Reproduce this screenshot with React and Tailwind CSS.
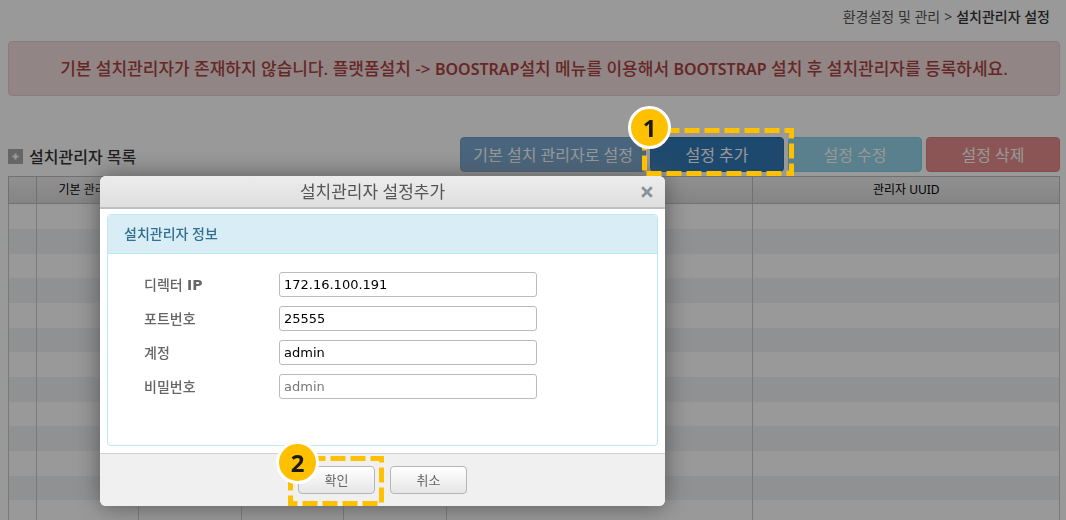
import React from "react";

const columns = ["", "기본 관리자", "", "", "", "", "관리자 UUID"];
const rows = Array.from({ length: 14 }, (_, i) => i);

const fields = [
  { id: "ip", label: "디렉터 IP", value: "172.16.100.191" },
  { id: "port", label: "포트번호", value: "25555" },
  { id: "account", label: "계정", value: "admin" },
  { id: "password", label: "비밀번호", placeholder: "admin" },
];

function StepBadge({ children, className }) {
  return (
    <span
      className={`absolute flex h-[43px] w-[43px] items-center justify-center rounded-full border-[3px] border-white bg-[#ffc000] text-2xl font-bold text-[#1a1a1a] ${className}`}
    >
      {children}
    </span>
  );
}

function DashedFrame({ width, height, className }) {
  return (
    <svg
      className={`pointer-events-none absolute max-w-none ${className}`}
      width={width}
      height={height}
      viewBox={`0 0 ${width} ${height}`}
      aria-hidden="true"
    >
      <rect
        x="2.5"
        y="2.5"
        width={width - 5}
        height={height - 5}
        fill="none"
        stroke="#ffc000"
        strokeWidth="5"
        strokeDasharray="15 5"
      />
    </svg>
  );
}

function ToolbarButton({ children, className, ...props }) {
  return (
    <button
      type="button"
      className={`h-[35px] min-w-[134px] rounded border px-3 text-base leading-5 text-white disabled:opacity-65 ${className}`}
      {...props}
    >
      {children}
    </button>
  );
}

function DialogButton({ children }) {
  return (
    <button
      type="button"
      className="h-7 w-[77px] rounded border border-[#b6b6b6] bg-linear-to-b from-white to-[#e6e6e6] text-[13px] leading-5 text-[#666]"
    >
      {children}
    </button>
  );
}

function ManagerDialog() {
  return (
    <section
      role="dialog"
      aria-labelledby="dialog-title"
      className="w-[565px] rounded-md bg-white shadow-[0_0_25px_#555]"
    >
      <header className="flex h-[33px] items-center rounded-t-md border-b-2 border-[#bfbfbf] bg-linear-to-b from-[#ececec] to-[#dfdfdf] px-2">
        <h2 id="dialog-title" className="flex-1 text-center text-[17px] leading-6 text-[#555]">
          설치관리자 설정추가
        </h2>
        <button type="button" aria-label="닫기" className="p-1">
          <svg width="12" height="12" viewBox="0 0 12 12" aria-hidden="true">
            <path d="M1.2 1.2 10.8 10.8M10.8 1.2 1.2 10.8" stroke="#87939a" strokeWidth="2.8" />
          </svg>
        </button>
      </header>

      <div className="px-[7px] pt-[5px] pb-[7px]">
        <div className="rounded border border-[#bce8f1] bg-white">
          <h3 className="flex h-[39px] items-center rounded-t border-b border-[#bce8f1] bg-[#d9edf7] px-4 text-sm font-medium text-[#31708f]">
            설치관리자 정보
          </h3>
          <form className="flex flex-col gap-[9px] pt-[18px] pr-[120px] pb-[46px] pl-9">
            {fields.map((field) => (
              <div key={field.id} className="flex items-center">
                <label
                  htmlFor={field.id}
                  className="w-[135px] font-['DejaVu_Sans','Noto_Sans_CJK_KR',sans-serif] text-sm font-medium text-[#666]"
                >
                  {field.label === "디렉터 IP" ? (
                    <>
                      디렉터 <b className="font-['DejaVu_Sans',sans-serif]">IP</b>
                    </>
                  ) : (
                    field.label
                  )}
                </label>
                <input
                  id={field.id}
                  type="text"
                  defaultValue={field.value}
                  placeholder={field.placeholder}
                  className="h-[25px] min-w-0 flex-1 rounded-[3px] border border-[#bbb] bg-white px-1 font-['DejaVu_Sans',sans-serif] text-[13px] text-black placeholder:text-[#777]"
                />
              </div>
            ))}
          </form>
        </div>
      </div>

      <footer className="flex h-[53px] items-center justify-center gap-[15px] rounded-b-md border-t border-[#d0d0d0] bg-[#f0f0f0]">
        <div className="relative h-7">
          <DialogButton>확인</DialogButton>
          <DashedFrame width={96} height={50} className="-top-[10px] -left-[10px]" />
          <StepBadge className="-top-[25px] -left-[22px]">2</StepBadge>
        </div>
        <DialogButton>취소</DialogButton>
      </footer>
    </section>
  );
}

export default function App() {
  return (
    <div className="h-screen overflow-hidden bg-white font-['Noto_Sans','Noto_Sans_CJK_KR',sans-serif]">
      <main className="pr-[6px] pl-2">
        <nav className="flex h-[41px] justify-end gap-1 pt-[7px] pr-[10px] text-sm leading-5 text-[#555]">
          <a href="#settings">환경설정 및 관리</a>
          <span>&gt;</span>
          <b className="font-medium text-[#333]">설치관리자 설정</b>
        </nav>

        <div
          role="alert"
          className="flex h-[55px] items-center justify-center rounded border border-[#ebccd1] bg-[#f2dede] text-[17px] font-medium whitespace-nowrap text-[#a94442]"
        >
          <p>
            기본 설치관리자가 존재하지 않습니다. 플랫폼설치 -&gt;{" "}
            <b className="text-base font-semibold">BOOSTRAP</b>설치 메뉴를 이용해서{" "}
            <b className="text-base font-semibold">BOOTSTRAP</b> 설치 후 설치관리자를 등록하세요.
          </p>
        </div>

        <div className="mt-[41px] flex h-[39px] items-start justify-between">
          <h1 className="flex h-[39px] items-center gap-[6px] text-base leading-6 font-medium text-[#333]">
            <svg width="15" height="15" viewBox="0 0 15 15" aria-hidden="true">
              <rect width="15" height="15" fill="#aaa" />
              <path d="M7.5 4.5v6M4.5 7.5h6" stroke="#fff" strokeWidth="2" />
            </svg>
            설치관리자 목록
          </h1>
          <div className="flex gap-1">
            <ToolbarButton disabled className="border-[#2e6da4] bg-[#337ab7]">
              기본 설치 관리자로 설정
            </ToolbarButton>
            <div className="relative">
              <ToolbarButton className="border-[#2e6da4] bg-[#337ab7]">설정 추가</ToolbarButton>
              <DashedFrame width={152} height={48} className="-top-[9px] -left-2 z-20" />
              <StepBadge className="-top-[31px] -left-[22px] z-20">1</StepBadge>
            </div>
            <ToolbarButton disabled className="border-[#46b8da] bg-[#5bc0de]">
              설정 수정
            </ToolbarButton>
            <ToolbarButton disabled className="border-[#d43f3a] bg-[#d9534f]">
              설정 삭제
            </ToolbarButton>
          </div>
        </div>

        <table className="w-full table-fixed border-collapse border border-[#bdbdbd] text-xs text-black">
          <colgroup>
            <col className="w-7" />
            <col className="w-[9.75%]" />
            <col className="w-[9.75%]" />
            <col className="w-[9.75%]" />
            <col className="w-[9.75%]" />
            <col />
            <col />
          </colgroup>
          <thead>
            <tr className="h-[27px] bg-linear-to-b from-[#f1f1f1] to-[#dcdcdc]">
              {columns.map((name, i) => (
                <th key={i} className="border border-[#bdbdbd] p-0 font-normal whitespace-nowrap">
                  {name}
                </th>
              ))}
            </tr>
          </thead>
          <tbody>
            {rows.map((row) => (
              <tr key={row} className="h-[25px] even:bg-[#f0f2f5] nth-[3n]:h-6">
                {columns.map((_, i) => (
                  <td key={i} className="border-x border-[#cbcbcb] p-0" />
                ))}
              </tr>
            ))}
          </tbody>
        </table>
      </main>

      <div className="fixed inset-0 z-10 bg-black/40 pt-[176px] pl-[100px]">
        <ManagerDialog />
      </div>
    </div>
  );
}
